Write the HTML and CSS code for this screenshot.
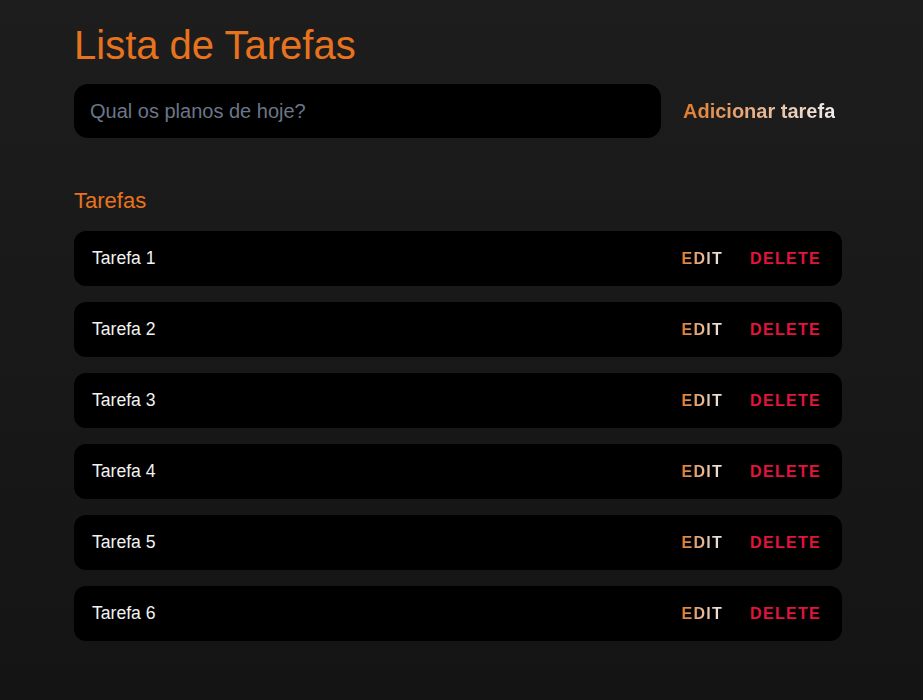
FILE: index.html
```html
<!DOCTYPE html>
<html lang="pt">
<head>
<meta charset="utf-8">
<title>Lista de Tarefas</title>
<link rel="stylesheet" href="styles.css">
</head>
<body>
<main class="app">
  <h1 class="title">Lista de Tarefas</h1>
  <form class="new-task">
    <input class="new-task-input" type="text" placeholder="Qual os planos de hoje?">
    <button class="add-btn" type="button">Adicionar tarefa</button>
  </form>
  <section class="tasks">
    <h2 class="tasks-title">Tarefas</h2>
    <div class="task-list">
      <div class="task"><span class="task-text">Tarefa 1</span><div class="actions"><button class="edit">EDIT</button><button class="delete">DELETE</button></div></div>
      <div class="task"><span class="task-text">Tarefa 2</span><div class="actions"><button class="edit">EDIT</button><button class="delete">DELETE</button></div></div>
      <div class="task"><span class="task-text">Tarefa 3</span><div class="actions"><button class="edit">EDIT</button><button class="delete">DELETE</button></div></div>
      <div class="task"><span class="task-text">Tarefa 4</span><div class="actions"><button class="edit">EDIT</button><button class="delete">DELETE</button></div></div>
      <div class="task"><span class="task-text">Tarefa 5</span><div class="actions"><button class="edit">EDIT</button><button class="delete">DELETE</button></div></div>
      <div class="task"><span class="task-text">Tarefa 6</span><div class="actions"><button class="edit">EDIT</button><button class="delete">DELETE</button></div></div>
    </div>
  </section>
</main>
</body>
</html>
```

FILE: styles.css
```css
* { box-sizing: border-box; }

html, body {
  margin: 0;
  height: 100%;
}

body {
  background: linear-gradient(to bottom, #1d1d1d, #141414);
  font-family: "Liberation Sans", Arial, sans-serif;
  color: #eee;
}

.app {
  width: 768px;
  margin-left: 74px;
  padding-top: 23px;
}

.title {
  margin: 0;
  font-size: 40px;
  font-weight: 400;
  color: #e8731f;
  line-height: 44px;
}

.new-task {
  display: flex;
  align-items: center;
  margin-top: 17px;
}

.new-task-input {
  width: 587px;
  height: 54px;
  border: none;
  border-radius: 14px;
  background: #000;
  padding: 0 16px;
  font-family: inherit;
  font-size: 20px;
  color: #eee;
  outline: none;
}

.new-task-input::placeholder {
  color: #6b7688;
}

.add-btn {
  margin-left: 22px;
  background: linear-gradient(to right, #e07a2c, #eeeeee);
  -webkit-background-clip: text;
  background-clip: text;
  color: transparent;
  border: none;
  padding: 0;
  font-family: inherit;
  font-size: 20px;
  font-weight: 700;
  cursor: pointer;
}

.tasks {
  margin-top: 49px;
}

.tasks-title {
  margin: 0 0 16px;
  font-size: 22px;
  font-weight: 400;
  color: #e8731f;
  line-height: 28px;
}

.task-list {
  display: flex;
  flex-direction: column;
  gap: 16px;
}

.task {
  display: flex;
  align-items: center;
  justify-content: space-between;
  height: 55px;
  background: #000;
  border-radius: 12px;
  padding: 0 21px 0 18px;
}

.task-text {
  font-size: 17.6px;
  color: #f2f2f2;
}

.actions {
  display: flex;
  gap: 27px;
}

.actions button {
  border: none;
  padding: 0;
  font-family: inherit;
  font-size: 16px;
  font-weight: 700;
  letter-spacing: 1.3px;
  cursor: pointer;
}

.edit {
  background: linear-gradient(to right, #e07a2c, #eeeeee);
  -webkit-background-clip: text;
  background-clip: text;
  color: transparent;
}

.delete {
  background: none;
  color: #e0153e;
}
```
